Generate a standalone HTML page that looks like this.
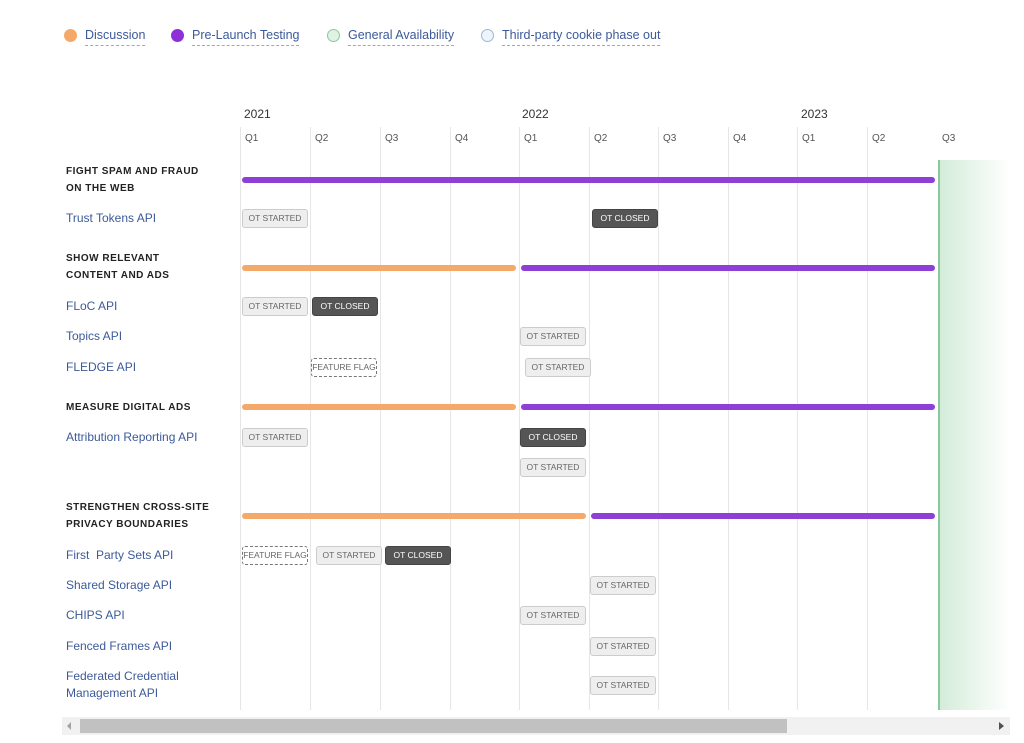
<!DOCTYPE html>
<html><head><style>
body{margin:0;width:1024px;height:743px;background:#fff;font-family:"Liberation Sans",sans-serif;position:relative;overflow:hidden}
.a{position:absolute}
.leg{position:absolute;top:28px;font-size:12.5px;color:#3c5a9a;border-bottom:1px dashed #9ab;padding-bottom:3px}
.dot{position:absolute;top:29px;width:13px;height:13px;border-radius:50%;box-sizing:border-box}
.vl{position:absolute;top:127px;height:583px;width:1px;background:#e6e6e6}
.q{position:absolute;top:133px;font-size:10px;color:#555}
.y{position:absolute;top:107px;font-size:12px;color:#333}
.h{position:absolute;left:66px;font-size:10px;font-weight:bold;color:#222;letter-spacing:.5px;line-height:17px}
.n{position:absolute;left:66px;font-size:12px;color:#3c5a9a;line-height:17px}
.bar{position:absolute;height:6px;border-radius:3px}
.o{background:#f4a96a}.p{background:#8e3fd6}
.b{position:absolute;width:64px;height:17px;border:1px solid #ccc;background:#eee;border-radius:3px;font-size:8.5px;color:#666;text-align:center;line-height:17px}
.d{background:#555;color:#fff;border-color:#444}
.f{background:#fff;border:1px dashed #777}
</style></head><body>
<div class="dot" style="left:64px;background:#f4a96a"></div><div class="leg" style="left:85px">Discussion</div>
<div class="dot" style="left:171px;background:#8e2fd8"></div><div class="leg" style="left:192px">Pre-Launch Testing</div>
<div class="dot" style="left:327px;background:#e0f2e4;border:1.5px solid #8cc79b"></div><div class="leg" style="left:348px">General Availability</div>
<div class="dot" style="left:481px;background:#eef4fb;border:1.5px solid #9ab8d8"></div><div class="leg" style="left:502px">Third-party cookie phase out</div>

<div class="y" style="left:244px">2021</div><div class="y" style="left:522px">2022</div><div class="y" style="left:801px">2023</div>

<div class="vl" style="left:240px"></div><div class="vl" style="left:310px"></div><div class="vl" style="left:380px"></div><div class="vl" style="left:450px"></div><div class="vl" style="left:519px"></div><div class="vl" style="left:589px"></div><div class="vl" style="left:658px"></div><div class="vl" style="left:728px"></div><div class="vl" style="left:797px"></div><div class="vl" style="left:867px"></div>
<div class="q" style="left:245px">Q1</div><div class="q" style="left:315px">Q2</div><div class="q" style="left:385px">Q3</div><div class="q" style="left:455px">Q4</div><div class="q" style="left:524px">Q1</div><div class="q" style="left:594px">Q2</div><div class="q" style="left:663px">Q3</div><div class="q" style="left:733px">Q4</div><div class="q" style="left:802px">Q1</div><div class="q" style="left:872px">Q2</div><div class="q" style="left:942px">Q3</div>

<div class="a" style="left:938px;top:160px;width:70px;height:550px;background:linear-gradient(to right,#d4ecd9,#fff);border-left:2px solid #8cc79b"></div>

<div class="h" style="top:163px">FIGHT SPAM AND FRAUD<br>ON THE WEB</div>
<div class="bar p" style="left:242px;width:693px;top:177px"></div>
<div class="n" style="top:210px">Trust Tokens API</div>
<div class="b" style="left:242px;top:209px">OT STARTED</div>
<div class="b d" style="left:592px;top:209px">OT CLOSED</div>

<div class="h" style="top:250px">SHOW RELEVANT<br>CONTENT AND ADS</div>
<div class="bar o" style="left:242px;width:274px;top:265px"></div>
<div class="bar p" style="left:521px;width:414px;top:265px"></div>
<div class="n" style="top:298px">FLoC API</div>
<div class="b" style="left:242px;top:297px">OT STARTED</div>
<div class="b d" style="left:312px;top:297px">OT CLOSED</div>
<div class="n" style="top:328px">Topics API</div>
<div class="b" style="left:520px;top:327px">OT STARTED</div>
<div class="n" style="top:359px">FLEDGE API</div>
<div class="b f" style="left:311px;top:358px">FEATURE FLAG</div>
<div class="b" style="left:525px;top:358px">OT STARTED</div>

<div class="h" style="top:399px">MEASURE DIGITAL ADS</div>
<div class="bar o" style="left:242px;width:274px;top:404px"></div>
<div class="bar p" style="left:521px;width:414px;top:404px"></div>
<div class="n" style="top:429px">Attribution Reporting API</div>
<div class="b" style="left:242px;top:428px">OT STARTED</div>
<div class="b d" style="left:520px;top:428px">OT CLOSED</div>
<div class="b" style="left:520px;top:458px">OT STARTED</div>

<div class="h" style="top:499px">STRENGTHEN CROSS-SITE<br>PRIVACY BOUNDARIES</div>
<div class="bar o" style="left:242px;width:344px;top:513px"></div>
<div class="bar p" style="left:591px;width:344px;top:513px"></div>
<div class="n" style="top:547px">First &nbsp;Party Sets API</div>
<div class="b f" style="left:242px;top:546px">FEATURE FLAG</div>
<div class="b" style="left:316px;top:546px">OT STARTED</div>
<div class="b d" style="left:385px;top:546px">OT CLOSED</div>
<div class="n" style="top:577px">Shared Storage API</div>
<div class="b" style="left:590px;top:576px">OT STARTED</div>
<div class="n" style="top:607px">CHIPS API</div>
<div class="b" style="left:520px;top:606px">OT STARTED</div>
<div class="n" style="top:638px">Fenced Frames API</div>
<div class="b" style="left:590px;top:637px">OT STARTED</div>
<div class="n" style="top:668px">Federated Credential<br>Management API</div>
<div class="b" style="left:590px;top:676px">OT STARTED</div>

<div class="a" style="left:62px;top:717px;width:948px;height:18px;background:#f1f1f1"></div>
<div class="a" style="left:80px;top:719px;width:707px;height:14px;background:#c1c1c1"></div>
<div class="a" style="left:67px;top:722px;width:0;height:0;border-top:4px solid transparent;border-bottom:4px solid transparent;border-right:4px solid #a3a3a3"></div>
<div class="a" style="left:999px;top:722px;width:0;height:0;border-top:4px solid transparent;border-bottom:4px solid transparent;border-left:5px solid #505050"></div>
</body></html>
